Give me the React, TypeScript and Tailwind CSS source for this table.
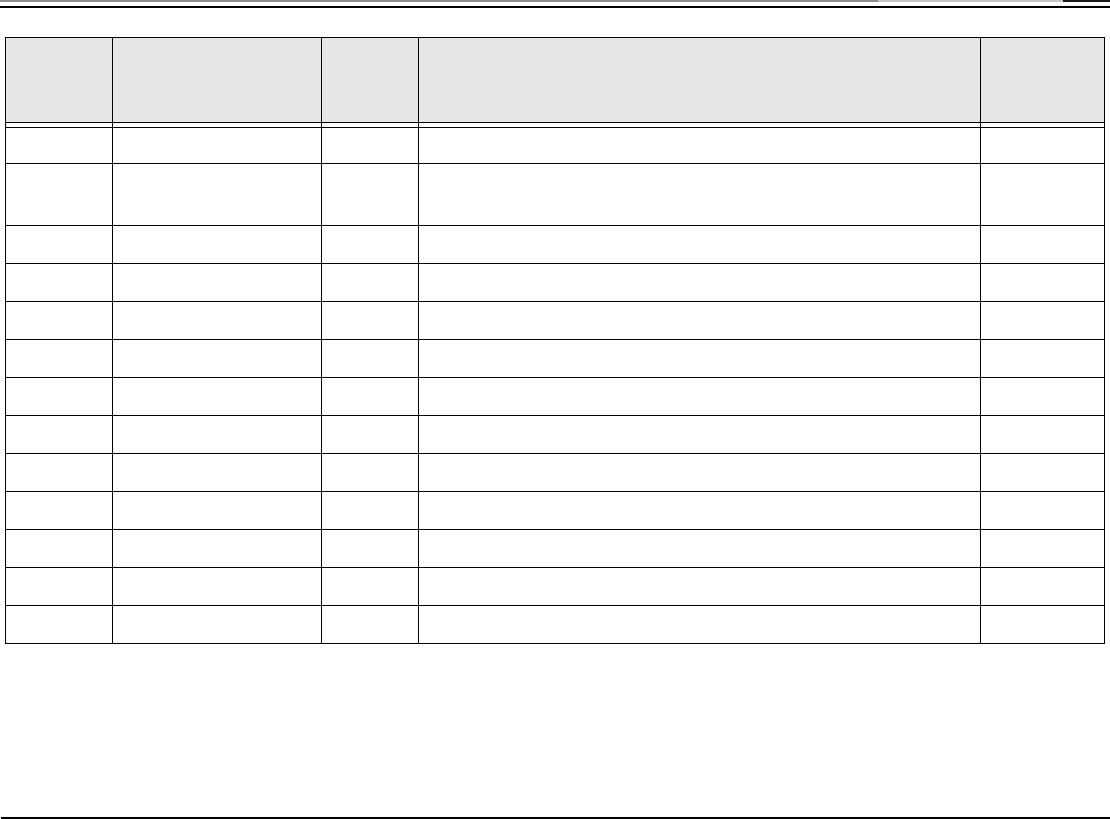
const cols = ['w-[107px]', 'w-[209px]', 'w-[97px]', 'w-[562px]', 'w-[124px]'];

// row heights, including each row's bottom border
const bodyRows = ['h-[36px]', 'h-[62px]', 'h-[38px]', 'h-[38px]', 'h-[38px]', 'h-[38px]', 'h-[38px]', 'h-[38px]', 'h-[38px]', 'h-[38px]', 'h-[38px]', 'h-[38px]', 'h-[38px]'];

function Row({ height, shaded }: { height: string; shaded?: boolean }) {
  return (
    <div className={`flex border-b border-black ${height} ${shaded ? 'bg-[#e6e6e6]' : 'bg-white'}`}>
      {cols.map((w, i) => (
        <div key={i} className={`${w} shrink-0 border-r border-black`} />
      ))}
    </div>
  );
}

export default function App() {
  return (
    <div className="h-[819px] w-[1110px] bg-white flex flex-col overflow-hidden">
      <div className="flex h-[2px] shrink-0">
        <div className="w-[878px] bg-[#8c8c8c]" />
        <div className="w-[185px] bg-[#c4c4c4]" />
        <div className="flex-1 bg-[#1a1a1a]" />
      </div>
      <div className="mt-[4px] h-[2px] shrink-0 bg-black" />

      <div className="ml-[5px] mt-[29px] w-[1100px] border-l border-t border-black">
        <Row height="h-[85px]" shaded />
        <Row height="h-[5px]" />
        {bodyRows.map((h, i) => (
          <Row key={i} height={h} />
        ))}
      </div>

      <div className="mt-auto ml-[1px] h-[2px] shrink-0 bg-black" />
    </div>
  );
}
